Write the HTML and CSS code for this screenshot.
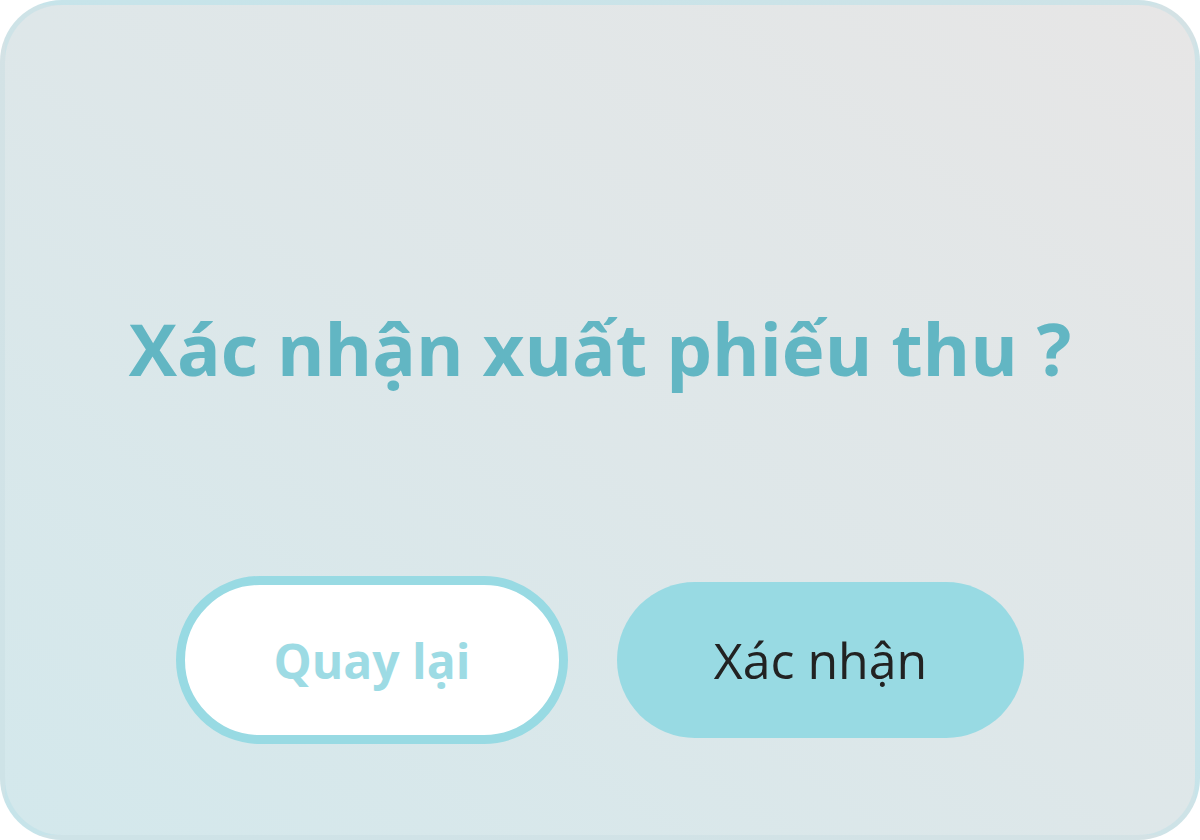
FILE: index.html
```html
<!DOCTYPE html>
<html lang="vi">
<head>
<meta charset="utf-8">
<link rel="stylesheet" href="styles.css">
</head>
<body>
<div class="card">
  <h1 class="title">Xác nhận xuất phiếu thu ?</h1>
  <div class="actions">
    <button class="btn btn-back">Quay lại</button>
    <button class="btn btn-confirm">Xác nhận</button>
  </div>
</div>
</body>
</html>
```
FILE: styles.css
```css
html, body {
  margin: 0;
  padding: 0;
  background: #ffffff;
}
body {
  width: 1200px;
  height: 840px;
  font-family: "Open Sans", "Noto Sans", sans-serif;
}
.card {
  box-sizing: border-box;
  width: 1200px;
  height: 840px;
  border-radius: 62px;
  border: 5px solid rgba(170, 220, 230, 0.3);
  background: linear-gradient(to top right, #d3e8ec 0%, #dee7e9 50%, #e7e6e6 100%);
  background-clip: border-box;
  display: flex;
  flex-direction: column;
  align-items: center;
}
.title {
  margin: 294px 0 0 0;
  font-size: 72.5px;
  font-weight: 700;
  line-height: 98px;
  color: #62b6c3;
  letter-spacing: 0;
}
.actions {
  margin-top: 179px;
  display: flex;
  align-items: center;
  gap: 49px;
}
.btn {
  font-family: "Open Sans", "Noto Sans", sans-serif;
  font-size: 50px;
  border-radius: 84px;
  cursor: pointer;
  padding: 0;
}
.btn-back {
  box-sizing: border-box;
  width: 392px;
  height: 168px;
  background: #ffffff;
  border: 9px solid #98dae3;
  color: #9ddbe4;
  font-size: 48px;
  font-weight: 700;
}
.btn-confirm {
  box-sizing: border-box;
  width: 407px;
  height: 156px;
  background: #98dae3;
  border: none;
  color: #222222;
  font-weight: 500;
}
```
